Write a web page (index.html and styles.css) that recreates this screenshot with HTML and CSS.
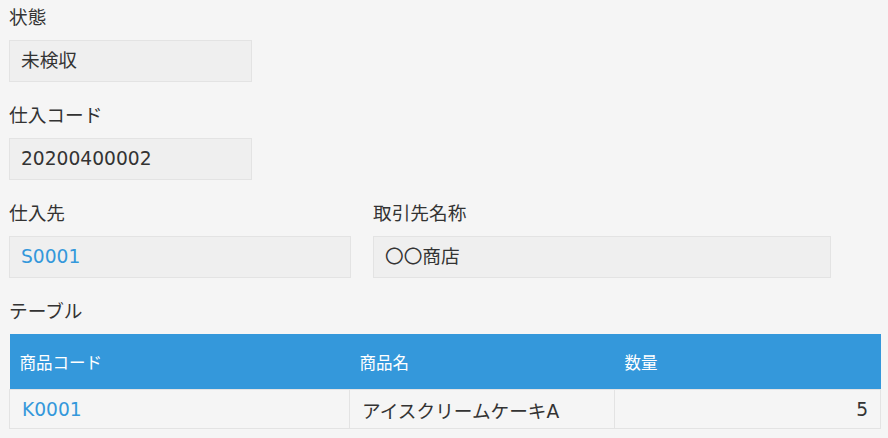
FILE: index.html
```html
<!DOCTYPE html>
<html lang="ja">
<head>
<meta charset="utf-8">
<link rel="stylesheet" href="styles.css">
</head>
<body>
<div class="form">
  <div class="row">
    <div class="field field-s">
      <div class="label">状態</div>
      <div class="value">未検収</div>
    </div>
  </div>
  <div class="row">
    <div class="field field-s">
      <div class="label">仕入コード</div>
      <div class="value">20200400002</div>
    </div>
  </div>
  <div class="row">
    <div class="field field-m">
      <div class="label">仕入先</div>
      <div class="value"><a class="link" href="#">S0001</a></div>
    </div>
    <div class="field field-l">
      <div class="label">取引先名称</div>
      <div class="value">〇〇商店</div>
    </div>
  </div>
  <div class="table-field">
    <div class="label">テーブル</div>
    <table class="subtable">
      <colgroup>
        <col class="c1"><col class="c2"><col class="c3">
      </colgroup>
      <thead>
        <tr><th>商品コード</th><th>商品名</th><th>数量</th></tr>
      </thead>
      <tbody>
        <tr><td><a class="link" href="#">K0001</a></td><td>アイスクリームケーキA</td><td class="num">5</td></tr>
      </tbody>
    </table>
  </div>
</div>
</body>
</html>
```

FILE: styles.css
```css
html, body {
  margin: 0;
  padding: 0;
  background: #f5f5f5;
}
body {
  font-family: "DejaVu Sans", "Noto Sans CJK JP", sans-serif;
  font-size: 18.67px;
  color: #333333;
}
.form {
  padding: 4px 0 0 9px;
}
.row {
  display: flex;
  gap: 22px;
  margin-bottom: 20px;
}
.label {
  line-height: 28px;
  height: 28px;
  margin-bottom: 8px;
  white-space: nowrap;
}
.value {
  box-sizing: border-box;
  height: 42px;
  line-height: 40px;
  border: 1px solid #e3e3e3;
  background: #efefef;
  padding: 0 11px;
  white-space: nowrap;
}
.field-s { width: 243px; }
.field-m { width: 342px; }
.field-l { width: 458px; }
.link {
  color: #3498db;
  text-decoration: none;
}
.subtable {
  border-collapse: collapse;
  table-layout: fixed;
  width: 871px;
}
.c1 { width: 340px; }
.c2 { width: 265px; }
.c3 { width: 266px; }
.subtable th {
  background: #3498db;
  color: #ffffff;
  font-weight: normal;
  font-size: 16.5px;
  text-align: left;
  height: 55px;
  padding: 0 10px;
}
.subtable td {
  border: 1px solid #e3e3e3;
  height: 39px;
  padding: 0 12px;
  box-sizing: border-box;
  white-space: nowrap;
}
.subtable td.num {
  text-align: right;
}
```
